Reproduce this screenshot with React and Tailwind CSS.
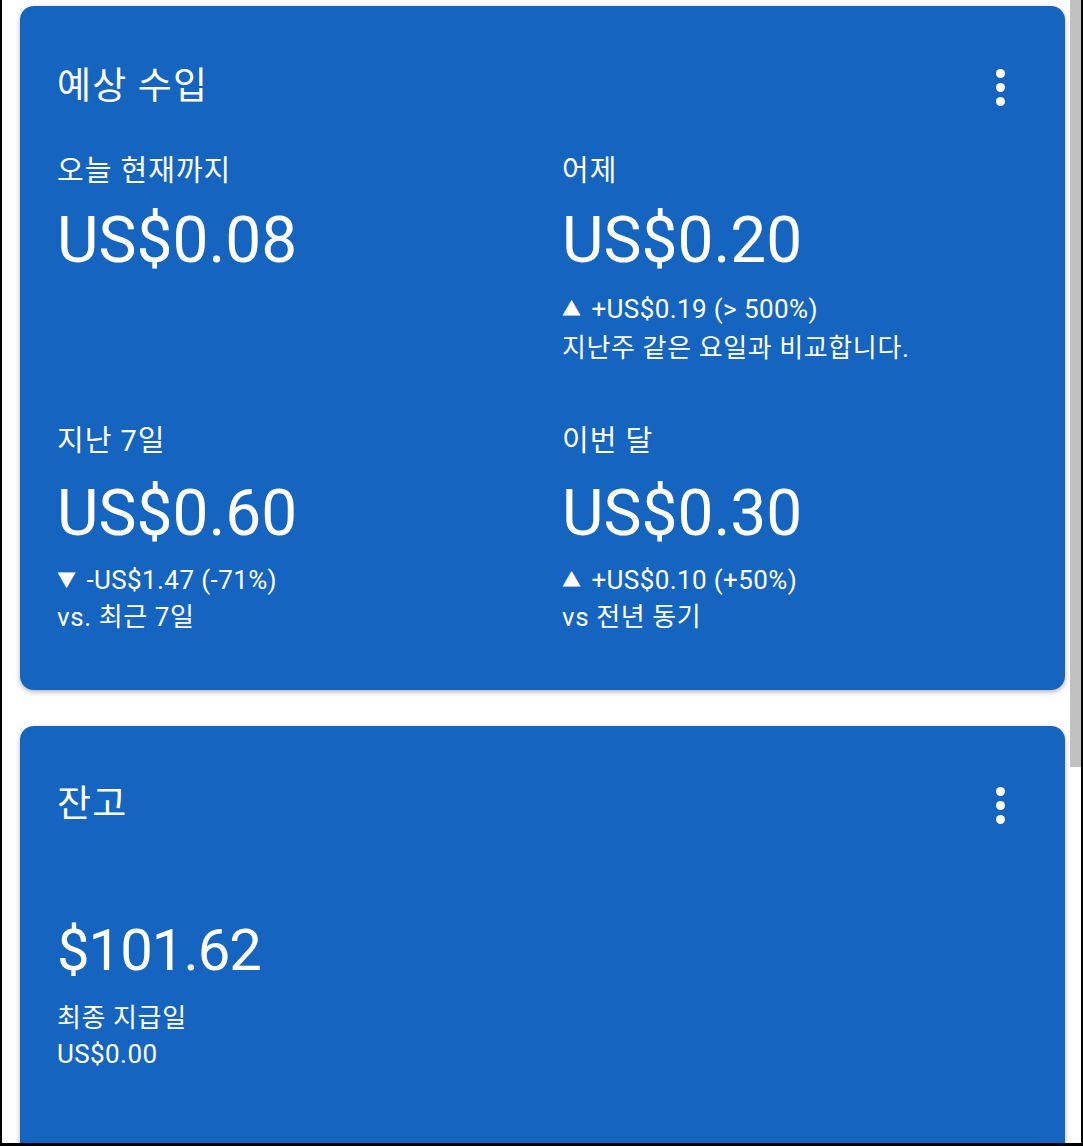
const font = "font-['Roboto','Noto_Sans_CJK_KR',sans-serif]";

function Dots() {
  return (
    <div className="flex flex-col items-center gap-[5px]">
      <span className="block h-[9px] w-[9px] rounded-full bg-white" />
      <span className="block h-[9px] w-[9px] rounded-full bg-white" />
      <span className="block h-[9px] w-[9px] rounded-full bg-white" />
    </div>
  );
}

function Delta({ up, text }) {
  return (
    <p className="text-[26px] leading-[38px] tracking-[0.4px]">
      <span className="mr-[10px] inline-block text-[19px] align-[2px]">{up ? '▲' : '▼'}</span>
      {text}
    </p>
  );
}

function Stat({ label, value, delta, note, amountGap = 'mt-[17px]', subGap = 'mt-[14px]', noteH = 'leading-[38px]' }) {
  return (
    <div>
      <p className="text-[29px] leading-[36px] tracking-[1px]">{label}</p>
      <p className={`${amountGap} text-[64px] leading-[70px]`}>{value}</p>
      {delta && (
        <div className={subGap}>
          {delta}
          <p className={`text-[26px] ${noteH} tracking-[0.6px]`}>{note}</p>
        </div>
      )}
    </div>
  );
}

export default function App() {
  return (
    <div className={`flex h-[1146px] w-[1083px] overflow-hidden border-l-2 border-r-2 border-b-[3px] border-black bg-white text-white ${font}`}>
      <div className="flex-1 overflow-hidden pl-[18px] pr-[5px] pt-[6px]">
        <div className="rounded-[14px] bg-[#1565c0] pb-[56px] pl-[37px] pt-[60px] shadow-[0_2px_5px_rgba(0,0,0,0.3)]">
          <div className="flex items-center justify-between pr-[60px]">
            <h2 className="text-[37px] leading-[42px] tracking-[1.2px]">예상 수입</h2>
            <Dots />
          </div>
          <div className="mt-[45px] grid grid-cols-[505px_1fr] gap-y-[56px]">
            <Stat label="오늘 현재까지" value="US$0.08" />
            <Stat
              label="어제"
              value="US$0.20"
              delta={<Delta up text="+US$0.19 (> 500%)" />}
              note="지난주 같은 요일과 비교합니다."
            />
            <Stat
              label="지난 7일"
              value="US$0.60"
              amountGap="mt-[20px]"
              subGap="mt-[12px]"
              noteH="leading-[34px]"
              delta={<Delta text="-US$1.47 (-71%)" />}
              note="vs. 최근 7일"
            />
            <Stat
              label="이번 달"
              value="US$0.30"
              amountGap="mt-[20px]"
              subGap="mt-[12px]"
              noteH="leading-[34px]"
              delta={<Delta up text="+US$0.10 (+50%)" />}
              note="vs 전년 동기"
            />
          </div>
        </div>

        <div className="mt-[36px] h-[500px] rounded-[14px] bg-[#1565c0] pl-[37px] pt-[58px] shadow-[0_2px_5px_rgba(0,0,0,0.3)]">
          <div className="flex items-center justify-between pr-[60px]">
            <h2 className="text-[37px] leading-[42px] tracking-[1.2px]">잔고</h2>
            <Dots />
          </div>
          <p className="mt-[89px] text-[58px] leading-[70px] tracking-[-1px]">$101.62</p>
          <div className="mt-[15px]">
            <p className="text-[26px] leading-[36px] tracking-[0.6px]">최종 지급일</p>
            <p className="text-[26px] leading-[36px] tracking-[0.4px]">US$0.00</p>
          </div>
        </div>
      </div>
      <div className="w-[11px] shrink-0">
        <div className="h-[767px] bg-[#c1c1c1]" />
      </div>
    </div>
  );
}
